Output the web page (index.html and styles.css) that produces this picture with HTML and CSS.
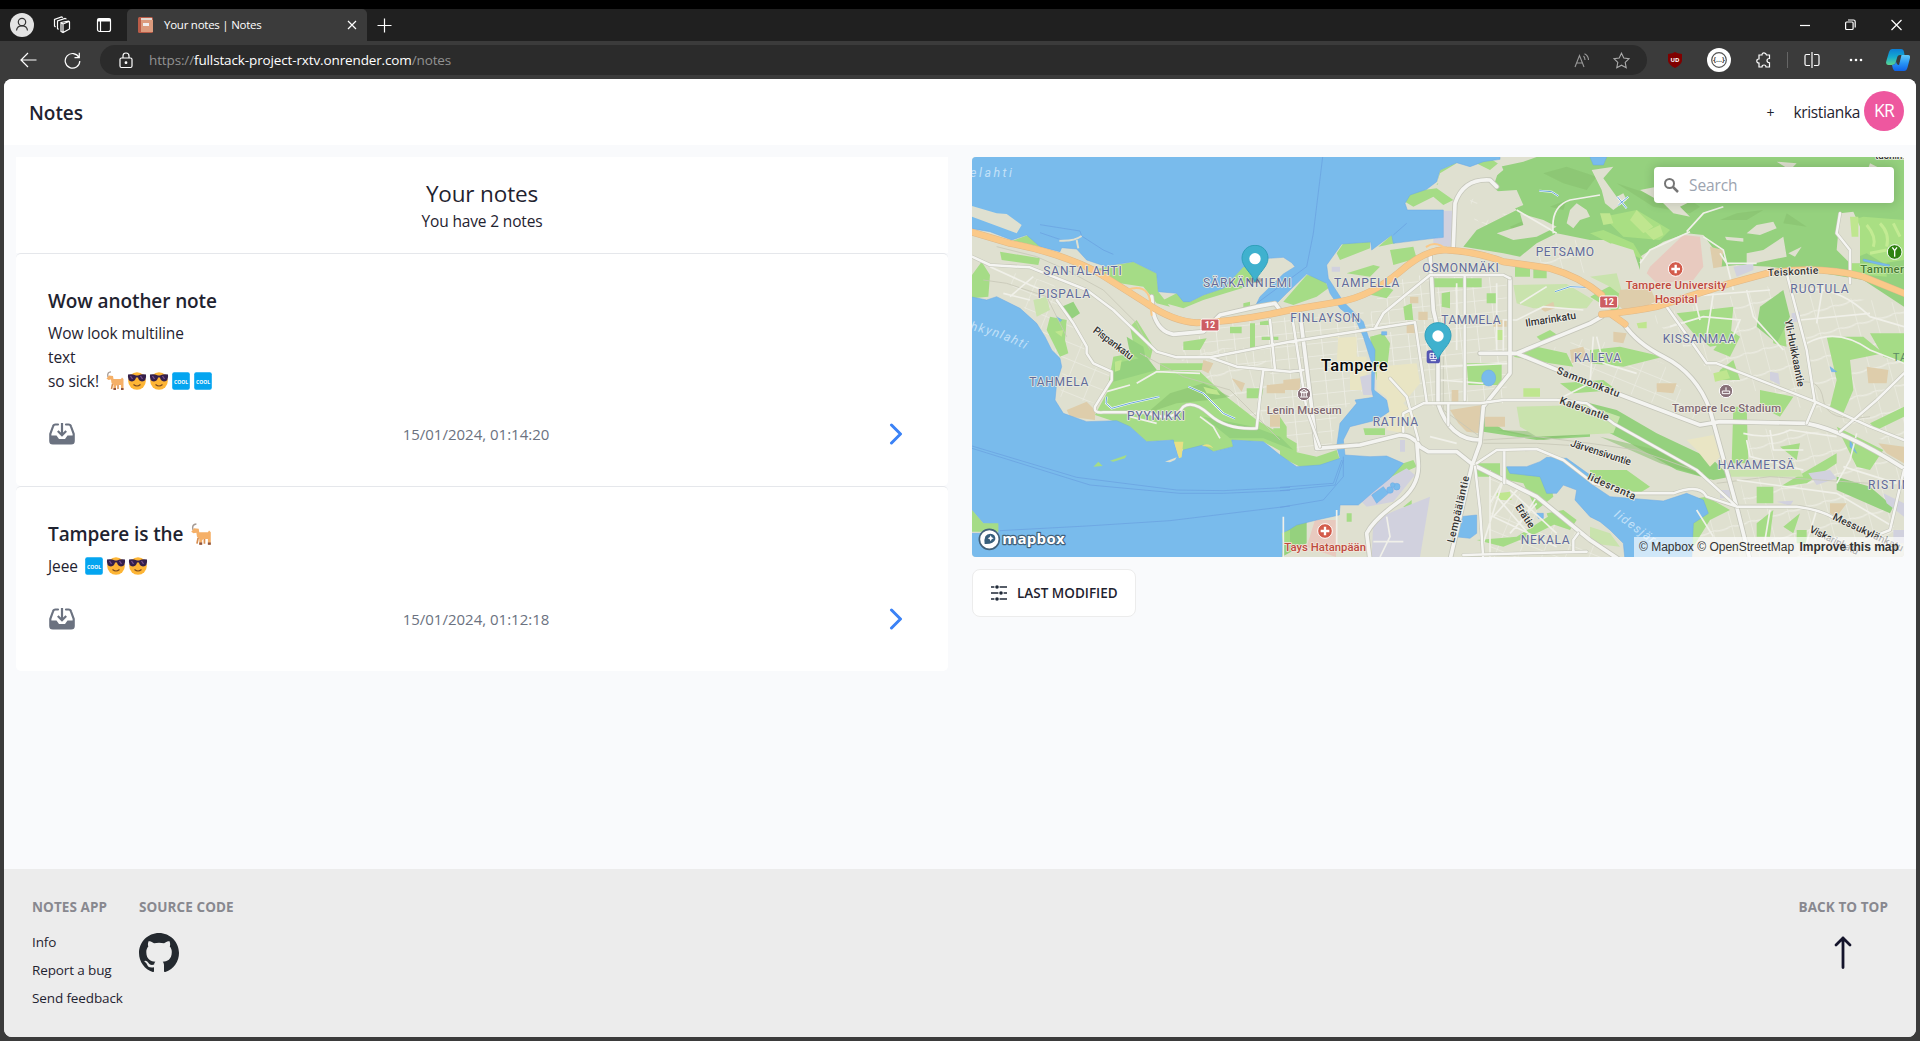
FILE: index.html
```html
<!DOCTYPE html>
<html lang="en">
<head>
<meta charset="utf-8">
<title>Your notes | Notes</title>
<link rel="stylesheet" href="styles.css">
</head>
<body>
<svg class="defs" width="0" height="0">
  <symbol id="goat" viewBox="0 0 20 20">
    <path d="M3 6C2 2.500 3.500 1 6 .8" fill="none" stroke="#a59a94" stroke-width="1.300"/>
    <path d="M4 4.500L8 5L8.500 8H16L17 6.500L18.500 8V19H16V14H12L11 15V19H8.500V14L6.500 12L6 8.500L3.500 9L1.500 7.500Z" fill="#f5b068"/>
    <path d="M8.500 17H11V19H8.500ZM16 17H18.500V19H16Z" fill="#8c5543"/><path d="M13 14V18M7.500 13L6.500 18" stroke="#d88e50" stroke-width="1.500"/>
  </symbol>
  <symbol id="shades" viewBox="0 0 20 20">
    <circle cx="10" cy="10" r="8.800" fill="#fdb535"/>
    <path d="M1 3.500Q5 2.500 9 4.500H11Q15 2.500 19 3.500Q19.800 10 15 10.500Q11.500 10 11 6.500H9Q8.500 10 5 10.500Q.2 10 1 3.500Z" fill="#35204b"/>
    <path d="M3.500 5L5.500 8M13.500 5L15.500 8" stroke="#78528d" stroke-width="1.300"/>
    <path d="M6.500 13.500Q10 16.500 13.500 13.500" fill="none" stroke="#7b4a20" stroke-width="1.200"/>
  </symbol>
  <symbol id="cool" viewBox="0 0 20 20"><rect x="1.200" y="1.200" width="17.600" height="17.600" rx="2" fill="#04a5f0"/><text x="10" y="12.600" text-anchor="middle" textLength="14" lengthAdjust="spacingAndGlyphs" class="cool-text">COOL</text></symbol>
  <symbol id="inbox" viewBox="0 0 26 22"><path d="M9 1.500H6.500Q4.500 1.500 4 3.500L1.300 11V18Q1.300 20.500 3.800 20.500H22.200Q24.700 20.500 24.700 18V11L22 3.500Q21.500 1.500 19.500 1.500H17" fill="none" stroke="#6b7280" stroke-width="2.200" stroke-linecap="round"/><path d="M1.300 12.500H7.500L10 16H16L18.500 12.500H24.700V18Q24.700 21 21.700 21H4.300Q1.300 21 1.300 18Z" fill="#6b7280"/><path d="M13 0V12M8.800 8L13 12.200L17.200 8" fill="none" stroke="#6b7280" stroke-width="2.200"/></symbol>
  <symbol id="chevron" viewBox="0 0 14 22"><path d="M2.500 2L11.500 11L2.500 20" fill="none" stroke="#3b82f6" stroke-width="3" stroke-linecap="round" stroke-linejoin="round"/></symbol>
  <symbol id="pin" viewBox="0 0 84 116"><path d="M42 2C18 2 3 20 3 41C3 67 32 84 42 112C52 84 81 67 81 41C81 20 66 2 42 2Z" fill="#3fb1ce" stroke="#2f9fb9" stroke-width="3"/><circle cx="42" cy="42" r="17" fill="#fff"/></symbol>
</svg>

<div class="browser">
  <header class="tabs">
    <div class="tools">
      <svg width="24" height="24" viewBox="0 0 24 24"><circle cx="12" cy="12" r="12" fill="#e3e3e3"/><circle cx="12" cy="9" r="3.700" fill="none" stroke="#333" stroke-width="1.200"/><path d="M6.500 17.500Q7 12.800 12 12.800T17.500 17.500" fill="none" stroke="#333" stroke-width="1.200"/></svg>
      <svg width="18" height="18" viewBox="0 0 18 18" class="line"><path d="M8 6.500L15.500 5Q16.500 5 16.500 6V13L10 16.500L8 15.500ZM8 6.500L10 8V16M10 8L16 5.500M5.500 13.500L4.500 12.500V5L12 2.500L13.500 3M2.500 11L1.500 10V3.500L8.500 1L10 1.500"/></svg>
      <svg width="16" height="16" viewBox="0 0 16 16" class="line"><rect x="1.500" y="1.500" width="13" height="13" rx="2"/><path d="M1.500 3H14.500" stroke-width="3"/><path d="M4.500 4V14"/></svg>
    </div>
    <div class="tab">
      <svg width="16" height="16" viewBox="0 0 16 16"><rect x="0" y="0" width="15" height="16" rx="1.500" fill="#ba5c48"/><path d="M3 1H14V3H3Z" fill="#e4d8d0"/><path d="M3 3H15V15H3Z" fill="#dc9b7d"/><path d="M5 6H11V9H5Z" fill="#f1eeee"/></svg>
      <span class="tab-title">Your notes | Notes</span>
      <svg width="10" height="10" viewBox="0 0 10 10" class="line"><path d="M1 1L9 9M9 1L1 9"/></svg>
    </div>
    <svg class="new-tab line" width="15" height="15" viewBox="0 0 15 15"><path d="M7.500 .5V14.500M.5 7.500H14.500"/></svg>
    <div class="window-buttons">
      <svg width="10" height="12" viewBox="0 0 10 12" class="line"><path d="M0 6.500H10"/></svg>
      <svg width="11" height="12" viewBox="0 0 11 12" class="line"><rect x=".6" y="3" width="7.500" height="7.500" rx="1"/><path d="M3 1H8.500Q10.200 1 10.200 2.700V8.500"/></svg>
      <svg width="11" height="12" viewBox="0 0 11 12" class="line"><path d="M.5 1L10.500 11M10.500 1L.5 11"/></svg>
    </div>
  </header>
  <div class="toolbar">
    <svg class="back line" width="17" height="16" viewBox="0 0 17 16"><path d="M16.500 8H1M8 1L1 8L8 15"/></svg>
    <svg class="reload line" width="17" height="17" viewBox="0 0 17 17"><path d="M15 5.500A7.300 7.300 0 1 0 15.800 9M15.300 .8V5.700H10.500"/></svg>
    <div class="address">
      <svg width="14" height="17" viewBox="0 0 14 17" class="line"><rect x="1" y="6" width="12" height="9.500" rx="1.500"/><path d="M4 6V4Q4 1 7 1T10 4V6"/><circle cx="7" cy="10.700" r=".8" fill="#fff"/></svg>
      <span class="url">https://<b>fullstack-project-rxtv.onrender.com</b>/notes</span>
      <svg class="read" width="16" height="15" viewBox="0 0 16 15"><path d="M1 14L5.500 2.500L10 14M2.500 10H8.500M9.500 3Q11 4.500 11 7M10.500 .8Q14.500 3 14.500 7" fill="none" stroke="#999" stroke-width="1.100"/></svg>
      <svg class="star" width="17" height="17" viewBox="0 0 17 17"><path d="M8.500 1.200L10.800 6L16 6.700L12.200 10.400L13.200 15.700L8.500 13.200L3.800 15.700L4.800 10.400L1 6.700L6.200 6Z" fill="none" stroke="#aaa" stroke-width="1.100"/></svg>
    </div>
    <div class="extensions">
      <svg width="14" height="16" viewBox="0 0 14 16"><path d="M7 0Q9 1.500 14 2V9Q13 13 7 16Q1 13 0 9V2Q5 1.500 7 0Z" fill="#800000"/><text x="7" y="9.800" text-anchor="middle" class="shield">UD</text></svg>
      <svg class="json" width="24" height="24" viewBox="0 0 24 24"><circle cx="12" cy="12" r="12" fill="#fff"/><circle cx="12" cy="12" r="7.300" fill="none" stroke="#555" stroke-width="1.200"/><text x="12" y="14.300" text-anchor="middle" class="braces">{...}</text></svg>
      <svg class="puzzle line" width="16" height="17" viewBox="0 0 16 17"><path d="M3 3H6Q6 .8 8 .8T10.500 3H13.500V6.500Q11 6.500 11 8.500T13.500 10.800V15H10Q10 13 8 13T6 15H3V11Q.8 11 .8 9T3 7Z"/></svg>
      <i class="separator"></i>
      <svg width="16" height="16" viewBox="0 0 16 16" class="line"><path d="M6 2.500H2.500Q1 2.500 1 4V12Q1 13.500 2.500 13.500H6M10 2.500H13.500Q15 2.500 15 4V12Q15 13.500 13.500 13.500H10M8 0V16"/></svg>
      <svg class="more" width="14" height="4" viewBox="0 0 14 4"><circle cx="2" cy="2" r="1.300" fill="#fff"/><circle cx="7" cy="2" r="1.300" fill="#fff"/><circle cx="12" cy="2" r="1.300" fill="#fff"/></svg>
      <svg class="copilot" width="24" height="22" viewBox="0 0 24 22">
        <linearGradient id="ca" x2="0" y2="1"><stop offset="0" stop-color="#0b7ed6"/><stop offset=".5" stop-color="#15a9cf"/><stop offset="1" stop-color="#5bd58f"/></linearGradient>
        <linearGradient id="cb" x2="0" y2="1"><stop offset="0" stop-color="#5fc9f8"/><stop offset=".5" stop-color="#2995f4"/><stop offset="1" stop-color="#0f62e8"/></linearGradient>
        <path d="M6 0H15Q17.500 0 18 3L18.500 6H14Q11.500 6 11 9L9.500 14Q8.500 16 6 16H2Q-.5 16 .2 12.500L3 3Q4 0 6 0Z" fill="url(#ca)"/><path d="M15 6H22Q24.500 6 24 9L21.500 18.500Q20.500 22 18 22H9.500Q7 22 6 16Q8.700 16 9.500 14L10 12Q10.500 16 13 16L15.500 6Z" fill="url(#cb)"/></svg>
    </div>
  </div>

  <main class="page">
    <nav class="navbar">
      <span class="brand">Notes</span>
      <div class="account"><span class="add">+</span><span class="user">kristianka</span><span class="avatar">KR</span></div>
    </nav>
    <div class="content">
      <section class="notes">
        <div class="heading"><h1>Your notes</h1><p>You have 2 notes</p></div>
        <article class="note">
          <h2>Wow another note</h2>
          <p>Wow look multiline<br>text<br>so sick! <svg class="emoji"><use href="#goat"/></svg><svg class="emoji"><use href="#shades"/></svg><svg class="emoji"><use href="#shades"/></svg><svg class="emoji"><use href="#cool"/></svg><svg class="emoji"><use href="#cool"/></svg></p>
          <div class="note-foot"><svg class="inbox"><use href="#inbox"/></svg><time>15/01/2024, 01:14:20</time><span class="open"><svg width="14" height="22"><use href="#chevron"/></svg></span></div>
        </article>
        <article class="note">
          <h2>Tampere is the <svg class="emoji big"><use href="#goat"/></svg></h2>
          <p>Jeee <svg class="emoji"><use href="#cool"/></svg><svg class="emoji"><use href="#shades"/></svg><svg class="emoji"><use href="#shades"/></svg></p>
          <div class="note-foot"><svg class="inbox"><use href="#inbox"/></svg><time>15/01/2024, 01:12:18</time><span class="open"><svg width="14" height="22"><use href="#chevron"/></svg></span></div>
        </article>
      </section>
      <section class="side">
        <div class="map">
          <svg class="map-canvas" viewBox="6 21 2796 1200">
            <defs>
              <pattern id="grid" width="52" height="38" patternUnits="userSpaceOnUse" patternTransform="rotate(-6)"><path d="M0 0H52M0 0V38" stroke="#f1f1ea" stroke-width="5" fill="none"/></pattern>
              <pattern id="grid2" width="66" height="47" patternUnits="userSpaceOnUse" patternTransform="rotate(22)"><path d="M0 0H66M0 0V47" stroke="#efefe7" stroke-width="4" fill="none"/></pattern>
              <pattern id="grid3" width="58" height="70" patternUnits="userSpaceOnUse" patternTransform="rotate(-15)"><path d="M0 0Q30 12 58 0M0 0V70" stroke="#efefe7" stroke-width="4" fill="none"/></pattern>
              <path id="bay" d="M0 540Q110 560 240 640"/>
            </defs>
            <rect x="0" y="0" width="2810" height="1230" fill="#dfe0d0"/>
            <g class="streets">
              <path fill="url(#grid)" d="M750 520L1180 480L1200 700L1100 800L1080 910L950 900L900 670L620 600ZM1190 560L1400 520L1400 770L1250 760ZM1240 400L1380 370L1400 520L1180 540ZM1400 380H1610V760H1400Z"/>
              <path fill="url(#grid2)" d="M100 360L250 400L350 600L420 680L380 760L270 740L280 640L160 470ZM1500 150L1600 110L1640 180L1520 240ZM1660 620L1860 560L2080 640L2200 820L1900 700ZM1560 980L1900 1180V1221H1560Z"/>
              <path fill="url(#grid3)" d="M1700 290L1860 260L1850 370L1650 335ZM2040 500L2430 400L2510 780L2240 680ZM2470 430L2802 460V900L2540 780ZM2290 830L2620 850L2800 960L2790 1210L2320 1060ZM2160 1080H2700V1221H2190ZM600 600L880 590L930 860L760 740Z"/>
            </g>
            <g fill="#a5dc86">
              <path d="M6 375L35 335L60 375L55 440L6 445ZM90 305L210 325L205 345L95 330ZM128 272L175 255L210 290ZM365 360L490 335L560 370L565 425L600 470L560 460L520 410L450 400ZM570 455L620 430L660 455L700 435L760 415L820 350L870 360L830 410L700 450L640 475ZM240 500L290 510L285 570L295 610L270 620L230 540ZM480 530L500 510L550 590L540 630L490 580ZM640 575L710 565L690 600L640 600ZM430 620L510 605L560 660L690 665L770 740L860 810L980 880L980 930L880 875L785 870L790 890L730 905L640 900L600 870L530 875L480 830L375 795L410 730ZM570 640H700V660H570ZM830 715H880L875 745H830ZM910 835H940V865H910ZM820 460L840 455V475H820Z"/>
              <path d="M780 530H815V550H780ZM840 520H855V600H840ZM870 515L905 510V525H870ZM875 560H925V570H875ZM1100 310L1120 280L1200 275V295L1110 330ZM1225 290L1265 255L1275 280ZM940 455L1010 375L1060 380L1075 415L1040 440L970 465ZM1260 300L1330 290L1340 325L1270 345ZM1130 370L1210 345L1230 350L1200 380ZM1180 430L1250 410L1270 420L1250 445ZM1305 155L1320 125L1400 115L1450 150L1420 165L1390 140L1330 170ZM1400 105L1410 60L1460 38V50L1425 90ZM1500 40L1560 25L1590 45L1560 70ZM1390 385H1535V412H1390ZM1415 430L1440 425V475L1415 470ZM1300 470L1325 460L1330 510H1305ZM1400 540H1420V590H1400ZM1635 340L1680 350V380H1635ZM1690 350L1730 360V385H1690ZM1200 560L1240 550L1260 580L1250 670L1220 690ZM1630 620L1700 590L1790 610L1810 650L1740 640ZM1490 640H1595V705H1495ZM1550 430H1580V460H1550ZM1700 560L1740 540L1770 560L1720 580Z"/>
              <path d="M930 800L950 830V900L1040 920L1100 900L1110 930L1060 950H990L930 920ZM1180 835H1245V855H1185ZM1300 940L1330 930L1340 950L1260 985L1210 1030L1160 1065L1180 1030ZM1300 1070L1325 1050V1085ZM1130 1090H1145V1115H1130ZM1520 1170L1640 1160L1750 1090L1780 1110L1700 1150L1600 1190ZM1520 940H1590V980H1520ZM1600 950L1700 960L1740 990L1750 1040L1700 1080L1660 1000L1610 990ZM1730 1090L1780 1080L1820 1110L1800 1140L1740 1120ZM1860 600L1950 590L2080 620L1960 650L1860 640ZM1770 700L1900 690L1940 720L1810 730ZM2230 600L2280 540L2310 560L2280 620ZM1860 440L1920 400L1960 440L1940 490ZM2120 490L2290 470L2280 580L2220 590L2170 550Z"/>
              <path d="M2250 660L2290 630L2310 690L2240 690ZM2290 770L2330 770L2335 940H2285ZM2400 460L2430 430L2450 590L2410 580ZM2570 560L2680 560L2740 610L2640 630L2650 720L2620 790L2580 770L2600 690ZM2700 820L2802 770V800L2720 840ZM2370 720L2470 740L2430 800L2370 770ZM2430 890L2490 880L2480 930ZM2600 830L2740 900L2700 960L2660 950ZM2360 1010H2410V1060H2360ZM2430 1010L2480 980L2600 910L2600 940L2510 1000ZM2360 1120L2410 1080L2400 1160L2360 1160ZM2440 1130L2490 1090L2470 1150ZM2150 1050L2210 1040L2280 1080L2220 1110L2170 1190ZM1860 960L1970 960L2040 1010L1990 1040L1860 990ZM2480 1140H2510V1180H2480ZM2700 550H2802V640L2740 620Z"/>
            </g>
            <g fill="#95d17e">
              <path d="M1660 35L1700 21H2802V470L2680 390L2560 370L2400 350L2300 345L2250 350L2240 310L2200 255L2150 250L2080 275L2010 320L2010 360L1960 345L1980 290L1940 270L1860 270L1760 250L1700 280L1650 320L1600 310L1480 290L1520 240L1640 180L1600 140L1570 110L1590 50Z"/>
              <path d="M275 470L310 455L330 490L300 510ZM470 560L520 590L530 640L480 610ZM1530 790L1600 840L1700 860L1860 840L1860 860L1700 870L1540 845ZM1860 760L1940 780L2060 850L2230 930L2280 980L2230 990L2120 960L1980 880L1860 820ZM935 1130L1010 1110V1180L935 1221ZM2600 980L2700 1010L2770 1070L2760 1090L2600 1020ZM2370 470L2440 420L2460 500L2420 580L2360 530ZM435 640L530 620L560 660L430 695ZM700 800L850 830L930 860L970 900L880 865L780 865Z"/>
            </g>
            <g fill="#86bf6e" opacity=".55"><path d="M530 790L600 730L700 700L780 740L720 750L620 760ZM1720 70L1790 50L1880 80L1850 120L1780 100ZM1620 230L1690 200L1650 260ZM1740 170L1790 150L1780 180ZM1940 100L2030 130L2100 110L2190 170L2160 190L2050 170ZM2250 210L2300 190L2380 180L2330 210ZM2450 190L2510 230L2440 220ZM1580 840L1860 850L1720 870ZM1890 860L2060 900L2200 980L2070 940Z"/></g>
            <g fill="#a9df83"><path d="M2610 220L2680 200L2802 210V330L2740 340L2690 310L2640 330ZM2640 340H2750V380L2640 370ZM1900 200L2000 180L2100 240L2070 270L1960 260ZM2020 330L1860 250L1900 240L1990 280Z"/></g>
            <g stroke="#c3eb93" stroke-width="9" fill="none"><path d="M2690 225Q2720 260 2710 290M2730 220Q2760 250 2750 290M2770 220L2790 260M2700 310L2750 300"/></g>
            <g fill="#dfe0d0">
              <path d="M1460 40L1510 35L1560 60L1590 35L1600 60L1540 110L1460 120L1400 100L1410 70ZM1700 260L1630 270L1580 250L1660 225L1650 190L1720 210L1760 230ZM1790 220L1800 180L1820 160L1850 180L1860 200L1830 210L1810 235ZM1500 180L1560 125L1640 120L1660 165L1530 220ZM1865 60L1930 50L1900 85L1940 140L1960 130L1970 150L1930 180L1905 160L1895 120ZM1925 280L1990 300L2010 360L1860 440V320ZM2010 120L2060 110L2080 140L2170 150L2130 170L2160 200L2110 190L2080 160ZM2380 300L2440 260L2450 320L2330 345L2330 310ZM2610 190L2650 185L2670 230V340H2640L2600 300ZM2350 80L2400 90L2380 110ZM2420 35L2480 40L2460 60Z"/>
              <path d="M2330 250L2360 225L2410 215L2420 235L2370 255ZM2265 260L2320 265V275L2270 270ZM2455 310L2495 290L2475 320ZM2700 40L2740 60L2690 70Z"/>
            </g>
            <g fill="#c9e3ad"><path d="M1630 405L1790 402L1870 450L1850 475H1690L1640 460ZM1640 770L1850 765L1950 800L1930 850L1700 860L1650 830ZM2270 960L2490 960L2500 980H2270ZM190 450L230 440L240 480L200 500ZM1860 380L1940 370L1960 440L1920 410ZM1860 1130L1920 1150L1950 1190L1860 1180Z"/></g>
            <g fill="#bfe68f"><path d="M1980 210L2000 180L2050 230L2020 250ZM2025 245L2070 225L2080 255L2050 270ZM1890 190L1920 190L1930 220L1900 225ZM2000 520L2030 515V535H2005ZM2230 670L2270 660L2280 685L2235 695ZM1660 715H1710V740H1660ZM435 635L455 630L450 660L435 665ZM1580 1030L1620 1025L1625 1050H1580ZM1580 540H1600V570H1580ZM700 710L740 720L750 735L710 730ZM255 545L280 540L275 560ZM2640 200H2665V260H2645Z"/></g>
            <path d="M2040 350L2140 255L2190 260L2200 350L2170 390L2060 400L2030 370ZM1035 1110H1100L1098 1221L1010 1190Z" fill="#e8cabf"/>
            <path d="M2220 290L2260 300L2255 350L2230 355ZM1950 420L2040 410L2060 460L1970 490L1940 460ZM1440 780L1535 765L1530 850L1490 845L1465 820ZM290 780L350 755L375 780V810L300 800ZM700 630L730 640L715 670L695 660ZM785 685L825 700L815 725ZM890 705L945 700V730H890ZM900 790H930V830H900ZM1320 440H1345V460H1320ZM1345 485H1373V510H1345ZM1310 520H1335V550H1310ZM1710 475L1750 455L1755 475L1725 485ZM1570 510H1610V530H1570ZM1545 800H1605V830H1545ZM2690 650L2755 660L2750 700L2695 700ZM2725 880L2802 890V940L2750 910ZM2580 1060L2630 1060L2600 1100L2580 1090ZM2060 700L2120 700L2110 730L2060 725ZM1930 545L1970 550L1960 580L1930 575ZM1800 600L1840 590L1850 620L1805 640ZM1445 720H1465V755H1445ZM940 690L990 685V720H940Z" fill="#decdab"/>
            <path d="M1070 565L1105 560L1100 640L1140 645V720H1190V620H1160V560ZM1220 650L1340 640L1350 700L1300 760L1340 800L1300 850L1250 840V740L1220 720ZM2150 870L2230 855L2250 920L2220 950L2180 900Z" fill="#e9e5c4"/>
            <path d="M1420 182H1460L1445 290L1390 285V262H1420ZM1170 680L1215 670V735L1180 735ZM1160 1040L1310 955L1335 975L1270 1055L1190 1070ZM1210 1110L1280 1080L1380 1040L1350 1221H1205ZM2290 350L2350 340L2350 360L2300 380ZM2465 490L2490 485V515H2465ZM2400 665L2425 670L2430 705L2400 690ZM2515 970L2580 960L2600 985L2540 1005ZM2740 1030L2802 1060V1100L2750 1060ZM1290 870H1305V905H1290ZM2420 1055L2470 1052L2460 1068ZM1085 350L1110 350V365H1085ZM2250 1020H2280V1045H2250ZM2770 1140H2802V1180H2770Z" fill="#d1d1de"/>
            <g fill="#79bbec" stroke="#6ba9e6" stroke-width="1.500">
              <path d="M0 0H1590V28L1540 35L1500 50L1460 38L1410 60L1400 95L1370 118L1320 135L1305 160L1312 180H1420V262L1390 265L1270 280L1265 255L1205 300L1202 276L1115 282L1070 345L1075 385L1120 455L1140 475L1180 515L1195 560L1215 600L1212 720L1250 750L1257 785L1220 810L1140 830L1120 870L1125 915L1200 920L1250 918L1300 940L1260 985L1205 1030L1165 1065L1110 1065L1108 1095L1040 1110L980 1125L940 1150L935 1230H0V1150H70L85 1150V1125L40 1120L6 1080H0V440L50 450L80 440L150 475L200 520L225 560L245 600L270 625L275 650L260 700L255 750L280 790L350 815L440 812L480 830L530 875L610 870L625 920L640 900L700 885L730 905L790 890L785 870L880 875L930 915L980 950L1050 945L1110 925L1100 890L1110 820L1160 760L1155 750L1210 742L1205 720V640L1180 560L1160 515L1110 475L1080 430L1070 400L1010 372L950 430L920 460L858 465L870 440L940 372L975 350L965 338L940 322L895 325L850 355L820 350L760 415L700 435L660 455H640L620 430L565 425L560 370L490 335L440 343L410 350L350 330L320 297L275 293L270 305L210 290L170 255L125 270L60 245L0 235Z"/>
              <path d="M1610 950L1670 950L1710 935L1730 922L1790 925L1860 975V1000L1920 1040L2080 1053L2150 1030L2200 1050L2215 1090L2170 1120L2165 1230H1965L1960 1180L1920 1140L1890 1115L1860 1100L1815 1050L1820 1020L1780 1005L1760 1030L1730 1030L1710 980L1620 970ZM1470 1100L1520 1095L1520 1150L1500 1165L1455 1160Z"/>
              <ellipse cx="1556" cy="684" rx="21" ry="24"/><path d="M1205 1035L1240 1010L1255 1030L1220 1060ZM260 500L275 510L270 515ZM1700 1090H1720V1105H1705ZM1860 21H1910L1900 45L1870 45ZM2640 870L2660 910L2640 890ZM2580 650L2600 665H2585ZM1235 545H1250V555H1235ZM2680 327L2760 345L2755 350L2680 333Z"/><circle cx="1260" cy="1020" r="10"/><circle cx="1280" cy="1010" r="10"/><circle cx="1268" cy="1005" r="7"/>
            </g>
            <path d="M6 168L80 190L110 192L155 225L140 250L6 200Z" fill="#dfe0d0"/>
            <path d="M370 950L385 935L398 948ZM420 932L470 915L465 925L430 935ZM935 1150L960 1140V1190L940 1180ZM6 1080L40 1120H85V1145H6Z" fill="#a5dc86"/>
            <path d="M612 875H640L635 922L627 925ZM695 888Q715 875 730 895L720 890Z" fill="#e7df84"/>
            <path d="M585 935L620 922L615 930L600 937Z" fill="#dfe0d0"/>
            <path d="M6 888L320 982L620 1020L760 1022L960 1012M6 895L360 1005L630 1030H760L960 1021M90 1142L350 1128L600 1112L960 1068M1058 21L1030 250L1010 350L860 460M930 1012L1090 1000L1115 930M930 1022L1095 1005L1120 930M930 1072L1060 1050L1120 980V920M1310 220L1270 255M210 224L330 243L335 258L290 275L210 248M335 258L400 300L430 313" fill="none" stroke="#689fe0" stroke-width="2"/>
            <path d="M268 272Q310 275 335 258M320 270L325 295" fill="none" stroke="#dfe0d0" stroke-width="6"/>
            <g fill="none" stroke="#fff" stroke-width="6"><path d="M410 740L408 760L425 775L480 760L568 740M655 710L700 730L760 790L795 806M1708 122L1745 125L1765 138M1755 425L1800 410L1850 412M1942 140L1970 175M1975 140L1945 165"/><path d="M410 740L408 760L425 775L480 760L568 740M655 710L700 730L760 790L795 806M1708 122L1745 125L1765 138M1755 425L1800 410L1850 412M1942 140L1970 175M1975 140L1945 165" stroke="#4b94d4" stroke-width="2.500"/></g>
            <g fill="none" stroke="#c7c7b7" stroke-width="3" opacity=".8"><path d="M80 290L200 320L290 360L400 420L500 520L540 600M1540 870L1700 860L1860 880L2000 900L2200 970M1540 880L1700 880L1860 890M1420 620V780L1530 860M510 610L640 680L780 720L850 790L930 870M40 390L110 400L230 440L290 560M2240 1000L2400 980L2700 1000M2480 700Q2550 680 2560 750T2700 800"/></g>
            <g fill="none" stroke="#f0f0e9" stroke-width="5">
              <path d="M60 350L180 405L240 430M120 440L190 380M100 430L180 450M500 700L560 665L690 670M410 725L480 705M690 800L730 830L750 865M480 800L560 820M1640 180L1760 250M1750 250Q1740 170 1800 150L1890 135M2010 340L2040 300L2160 245M2200 260L2260 300L2290 420M2150 245L2200 190L2260 170M2250 310L2270 340H2360M1600 610V510H1640L1720 470L1840 480M1650 460L1730 410M1880 560L1900 640L2000 670M1780 740L1860 700L1870 560M2020 480Q2050 450 2150 440L2400 420M2100 530L2200 500L2310 510L2280 580M2170 430L2190 510M2230 430L2210 560M2330 420L2350 500L2440 600M2510 580Q2600 530 2700 600L2802 640M2480 420Q2600 400 2700 500L2802 530M2490 510L2700 490M2560 400L2540 520M2320 850Q2400 870 2460 840L2600 860M2330 870L2340 920L2500 960M2400 840L2410 900H2500M2660 850L2640 930L2600 1000M2620 950L2780 1000M2300 990L2600 1030L2770 1130M2400 1080L2380 1200M2540 1080L2500 1210M2180 1080L2230 1160M1560 960V1221M1600 900V990L1560 1060M1600 990L1540 1180M1650 1010L1570 1100L1760 1190M1700 1040L1650 1120M1700 1060L1620 1150M1580 1040L1700 1180M1620 1020L1760 1150M1250 1100L1260 1160L1230 1221M1210 1175H1300M940 1221V1100M1100 1080V1190M1460 880L1380 860M1400 650L1620 640M1410 690L1540 700M1460 400V600M1580 400V600"/>
            </g>
            <g fill="none" stroke-linejoin="round" stroke-linecap="round">
              <g stroke="#c5c6ba" stroke-width="16"><path d="M545 440L550 490Q565 545 610 553L700 545L750 495L860 470L915 460L930 480M990 490L1040 895L1170 885L1290 855Q1330 855 1350 890L1375 905H1460L1510 945L1700 1040L1860 1170L1950 1230M1340 870L1345 940Q1350 1010 1280 1060T1190 1150L1200 1230M1380 310L1390 480L1404 540V760Q1440 870 1530 870M1530 610H1640L1860 520L1895 500M1640 610L1860 700L2190 825L2250 815L2510 820Q2620 840 2802 955M1960 520Q2000 580 2080 620Q2180 670 2220 780L2300 1070L2340 1230M1620 385V670L1540 770L1530 880L1505 950L1440 1230M1450 290L1455 160Q1480 85 1560 90L1580 110"/></g>
              <g stroke="#f4f4f1" stroke-width="11"><path d="M545 440L550 490Q565 545 610 553L700 545L750 495L860 470L915 460L930 480M990 490L1040 895L1170 885L1290 855Q1330 855 1350 890L1375 905H1460L1510 945L1700 1040L1860 1170L1950 1230M1340 870L1345 940Q1350 1010 1280 1060T1190 1150L1200 1230M1380 310L1390 480L1404 540V760Q1440 870 1530 870M1530 610H1640L1860 520L1895 500M1640 610L1860 700L2190 825L2250 815L2510 820Q2620 840 2802 955M1960 520Q2000 580 2080 620Q2180 670 2220 780L2300 1070L2340 1230M1620 385V670L1540 770L1530 880L1505 950L1440 1230M1450 290L1455 160Q1480 85 1560 90L1580 110"/></g>
              <g stroke="#c6c7bb" stroke-width="11"><path d="M6 320L60 345L180 352L350 420L430 480L560 605L620 622H720L960 575L1335 517L1370 755M720 622L800 650L960 665L1000 660M260 450L310 520L350 590V610L370 640L425 665V690L375 770Q370 790 400 787L530 787Q610 820 640 770Q670 750 720 795T860 835L870 740L880 660M900 510L915 660M965 490L1010 780L1050 890M1215 535L1240 490L1300 440L1380 375H1600L1620 385M1484 380V750M1260 685L1310 740L1345 870M1300 845V790L1360 760L1530 760L1600 750H1760L1850 760L1930 820L2180 960L2300 1070H2480Q2560 1080 2600 1110L2710 1160L2760 1140L2802 960M2450 370L2510 600L2535 760L2510 820M2090 470L2210 640L2240 640L2535 755L2700 830L2802 870M2610 845L2720 750L2802 670M1520 940L1580 900L1700 897L1780 930L1870 1000L1990 1030H2110Q2190 1000 2210 1040L2300 1070M1515 950L1530 1080L1540 1230M1603 900V1000M1435 825L1435 765M1480 1215L1850 1205M1810 1205V1170L1825 1150M2640 400V300L2600 250L2610 190"/></g>
              <g stroke="#f5f5f2" stroke-width="7.500"><path d="M6 320L60 345L180 352L350 420L430 480L560 605L620 622H720L960 575L1335 517L1370 755M720 622L800 650L960 665L1000 660M260 450L310 520L350 590V610L370 640L425 665V690L375 770Q370 790 400 787L530 787Q610 820 640 770Q670 750 720 795T860 835L870 740L880 660M900 510L915 660M965 490L1010 780L1050 890M1215 535L1240 490L1300 440L1380 375H1600L1620 385M1484 380V750M1260 685L1310 740L1345 870M1300 845V790L1360 760L1530 760L1600 750H1760L1850 760L1930 820L2180 960L2300 1070H2480Q2560 1080 2600 1110L2710 1160L2760 1140L2802 960M2450 370L2510 600L2535 760L2510 820M2090 470L2210 640L2240 640L2535 755L2700 830L2802 870M2610 845L2720 750L2802 670M1520 940L1580 900L1700 897L1780 930L1870 1000L1990 1030H2110Q2190 1000 2210 1040L2300 1070M1515 950L1530 1080L1540 1230M1603 900V1000M1435 825L1435 765M1480 1215L1850 1205M1810 1205V1170L1825 1150M2640 400V300L2600 250L2610 190"/></g>
              <path d="M-5 243L120 280Q260 305 380 365L530 460Q610 515 680 518Q800 515 960 480L1110 455Q1200 440 1290 365Q1370 295 1430 300Q1520 305 1600 335L1740 355Q1830 380 1895 435M1895 493Q1990 485 2060 470L2280 400L2390 370Q2540 345 2680 380L2815 435M1920 490L1965 522" stroke="#dfb889" stroke-width="21"/>
              <path d="M-5 243L120 280Q260 305 380 365L530 460Q610 515 680 518Q800 515 960 480L1110 455Q1200 440 1290 365Q1370 295 1430 300Q1520 305 1600 335L1740 355Q1830 380 1895 435M1895 493Q1990 485 2060 470L2280 400L2390 370Q2540 345 2680 380L2815 435M1920 490L1965 522" stroke="#fac989" stroke-width="18"/>
              <path d="M470 420Q530 400 540 450L545 495M1370 290Q1400 270 1430 300" stroke="#fac989" stroke-width="6"/>
            </g>
            <g class="district">
              <text x="220" y="375" textLength="238">SANTALAHTI</text><text x="203" y="445" textLength="160">PISPALA</text><text x="699" y="410" textLength="268">SÄRKÄNNIEMI</text><text x="1092" y="410" textLength="199">TAMPELLA</text><text x="961" y="515" textLength="212">FINLAYSON</text><text x="1357" y="366" textLength="232">OSMONMÄKI</text><text x="1697" y="317" textLength="178">PETSAMO</text><text x="1414" y="522" textLength="181">TAMMELA</text><text x="2461" y="429" textLength="178">RUOTULA</text><text x="2078" y="580" textLength="221">KISSANMAA</text><text x="1812" y="636" textLength="144">KALEVA</text><text x="178" y="708" textLength="180">TAHMELA</text><text x="471" y="809" textLength="177">PYYNIKKI</text><text x="1208" y="828" textLength="139">RATINA</text><text x="1652" y="1183" textLength="150">NEKALA</text><text x="2243" y="957" textLength="232">HAKAMETSÄ</text><text x="2694" y="1018" textLength="130">RISTIN</text>
            </g>
            <text class="park" x="2768" y="632">TA</text>
            <g class="street">
              <text transform="translate(367 545) rotate(37)" textLength="142">Pispankatu</text><text transform="translate(1668 530) rotate(-9)" textLength="153">Ilmarinkatu</text><text transform="translate(1758 670) rotate(21)" textLength="200">Sammonkatu</text><text transform="translate(1767 760) rotate(20)" textLength="155">Kalevantie</text><text transform="translate(1799 888) rotate(18)" textLength="190">Järvensivuntie</text><text transform="translate(1850 987) rotate(24)" textLength="155">Iidesranta</text><text transform="translate(1452 1180) rotate(-77)" textLength="205">Lempääläntie</text><text transform="translate(1635 1070) rotate(57)" textLength="80">Erätie</text><text transform="translate(2394 379) rotate(-3)" textLength="152">Teiskontie</text><text transform="translate(2444 510) rotate(79)" textLength="205">Yli-Huikkaantie</text><text transform="translate(2586 1108) rotate(25)" textLength="230">Messukylänkatu</text><text transform="translate(2516 1145) rotate(26)" textLength="160">Viskarinkatu</text><text x="2715" y="28" textLength="90">taohin.</text>
            </g>
            <g class="water"><text x="0" y="80" textLength="130">elahti</text><text><textPath href="#bay">hkynlahti</textPath></text><text transform="translate(1930 1098) rotate(36)" textLength="180">Iidesjärvi</text></g>
            <g class="red"><text x="1967" y="417" textLength="303">Tampere University</text><text x="2055" y="460" textLength="127">Hospital</text><text x="943" y="1204" textLength="245">Tays Hatanpään</text></g>
            <g class="poi"><text x="890" y="792" textLength="225">Lenin Museum</text><text x="2106" y="786" textLength="327">Tampere Ice Stadium</text></g>
            <text class="golf" x="2671" y="369" textLength="131">Tammer</text>
            <text class="city" x="1053" y="663" textLength="200">Tampere</text>
            <g stroke="#fff" stroke-width="3"><circle cx="2117" cy="357" r="22" fill="#d35b4b"/><circle cx="1065" cy="1143" r="22" fill="#d35b4b"/><circle cx="2774" cy="306" r="22" fill="#2f8210"/><circle cx="1002" cy="732" r="20" fill="#887078"/><circle cx="2268" cy="723" r="20" fill="#887078"/></g>
            <path d="M2117 344V370M2104 357H2130M1065 1130V1156M1052 1143H1078" stroke="#fff" stroke-width="7"/><path d="M2767 292L2774 302L2781 292M2774 302V320" stroke="#fff" stroke-width="4" fill="none"/><path d="M990 741H1014M992 728H1012M995 728V740M1002 728V740M1009 728V740M990 726L1002 718L1014 726ZM2257 723H2279V731H2257ZM2268 712V722" stroke="#fff" stroke-width="3" fill="none"/>
            <g class="shield12"><rect x="693" y="507" width="54" height="36" rx="5"/><text x="720" y="534">12</text><rect x="1889" y="438" width="54" height="36" rx="5"/><text x="1916" y="465">12</text></g>
            <rect x="1370" y="601" width="40" height="39" rx="8" fill="#5356b2"/><path d="M1380 610H1400V626H1380ZM1380 618H1400M1390 610V626M1382 632L1398 632" fill="none" stroke="#fff" stroke-width="3"/>
            <ellipse cx="855" cy="390" rx="22" ry="9" fill="#303030" opacity=".25"/><use href="#pin" x="813" y="284" width="84" height="116"/><use href="#pin" x="1362" y="516" width="84" height="116"/>
            <g class="mapbox"><circle cx="58" cy="1168" r="30" fill="#fff" stroke="#42617a" stroke-width="5"/><path d="M44 1182Q40 1151 61 1151Q77 1152 76 1168Q72 1183 44 1182Z" fill="#385f7c"/><path d="M62 1156L65 1162L71 1165L65 1168L62 1174L59 1168L53 1165L59 1162Z" fill="#fff"/><text x="97" y="1182" textLength="187">mapbox</text></g>
          </svg>
          <div class="search"><svg width="15" height="15" viewBox="0 0 15 15"><circle cx="5.500" cy="5.500" r="4.500" fill="none" stroke="#757575" stroke-width="2"/><path d="M9 9L14 14" stroke="#757575" stroke-width="2.500"/></svg><span>Search</span></div>
          <div class="attribution"><span>© Mapbox</span> <span>© OpenStreetMap</span> <b>Improve this map</b></div>
        </div>
        <button class="sort"><svg width="16" height="16" viewBox="0 0 16 16"><path d="M0 2H16M0 8H16M0 14H16" stroke="#1f2937" stroke-width="1.400"/><path d="M3.400 0H8.600V4H3.400ZM7.400 6H12.600V10H7.400ZM3.400 12H8.600V16H3.400Z" fill="#fff"/><circle cx="6" cy="2" r="1.800" fill="#1f2937"/><circle cx="10" cy="8" r="1.800" fill="#1f2937"/><circle cx="6" cy="14" r="1.800" fill="#1f2937"/></svg><span>LAST MODIFIED</span></button>
      </section>
    </div>
    <footer class="footer">
      <div class="col"><h3>NOTES APP</h3><a>Info</a><a>Report a bug</a><a>Send feedback</a></div>
      <div class="col"><h3>SOURCE CODE</h3><svg class="github" width="40" height="40" viewBox="0 0 16 16"><path fill="#24292f" d="M8 0C3.580 0 0 3.580 0 8c0 3.540 2.290 6.530 5.470 7.590.4.070.55-.17.55-.38 0-.19-.01-.82-.01-1.490-2.010.37-2.530-.49-2.690-.94-.09-.23-.48-.94-.82-1.130-.28-.15-.68-.52-.01-.53.63-.01 1.080.58 1.230.82.72 1.210 1.870.87 2.330.66.07-.52.28-.87.51-1.070-1.780-.2-3.640-.89-3.640-3.950 0-.87.31-1.590.82-2.150-.08-.2-.36-1.020.08-2.120 0 0 .67-.21 2.200.82.640-.18 1.320-.27 2-.27s1.360.09 2 .27c1.530-1.040 2.200-.82 2.200-.82.44 1.100.16 1.920.08 2.120.51.56.82 1.270.82 2.150 0 3.070-1.870 3.750-3.650 3.950.29.25.54.73.54 1.480 0 1.070-.01 1.930-.01 2.200 0 .21.15.46.55.38A8.010 8.010 0 0 0 16 8c0-4.420-3.580-8-8-8Z"/></svg></div>
      <div class="col top"><h3>BACK TO TOP</h3><svg width="18" height="34" viewBox="0 0 18 34"><path d="M9 31.500V2M2 9L9 2L16 9" fill="none" stroke="#14142b" stroke-width="2.800" stroke-linecap="round" stroke-linejoin="round"/></svg></div>
    </footer>
  </main>
</div>
</body>
</html>
```

FILE: styles.css
```css
* { box-sizing: border-box; }
body { margin: 0; font-family: "Open Sans", "Noto Sans", sans-serif; color: #1f2330; }
h1, h2, h3, p { margin: 0; }
svg { flex: none; display: block; }
.defs { position: absolute; }
.line { fill: none; stroke: #fff; stroke-width: 1.2; }
.browser { height: 1041px; display: flex; flex-direction: column; background: #3b3b3b; border-top: 9px solid #000; overflow: hidden; }

.tabs { height: 32px; background: #202020; display: flex; align-items: center; }
.tools { width: 127px; padding-left: 10px; display: flex; align-items: center; gap: 19px; }
.tools svg:last-child { margin-left: 6px; }
.tab { width: 240px; height: 32px; background: #3b3b3b; border-radius: 5px 5px 0 0; display: flex; align-items: center; padding: 0 10px 0 11px; color: #fff; font-size: 11.5px; }
.tab-title { flex: 1; padding: 0 0 2px 10px; letter-spacing: -.25px; white-space: nowrap; }
.new-tab { margin-left: 10px; }
.window-buttons { margin-left: auto; padding-right: 18px; display: flex; gap: 35px; }

.toolbar { height: 38px; display: flex; align-items: center; padding: 0 10px 0 20px; }
.reload { margin: 0 19px 0 27px; }
.address { width: 1547px; height: 30px; border-radius: 15px; background: #2b2b2b; display: flex; align-items: center; padding: 0 17px 0 19px; }
.url { flex: 1; margin-left: 16px; color: #929292; font-size: 13.5px; letter-spacing: -.13px; }
.url b { color: #fff; font-weight: 400; }
.star { margin-left: 23px; }
.extensions { flex: 1; display: flex; align-items: center; padding-left: 21px; }
.json, .puzzle { margin-left: 25px; }
.separator { width: 1px; height: 16px; background: #666; margin: 0 16px 0 15px; }
.more { margin-left: 29px; }
.copilot { margin-left: 23px; }
.shield { font: 700 6px "Open Sans", sans-serif; fill: #fff; }
.braces { font: 700 7px "Open Sans", sans-serif; fill: #444; }

.page { margin: 0 4px 4px; flex: 1; background: #f9fafc; border-radius: 8px; overflow: hidden; display: flex; flex-direction: column; }
.navbar { height: 66px; background: #fff; display: flex; align-items: center; justify-content: space-between; padding: 0 12px 0 25px; }
.brand { font-size: 19px; font-weight: 600; letter-spacing: -.05px; padding-top: 2px; }
.account { display: flex; align-items: center; }
.add { font-size: 14px; margin-right: 19px; }
.user { font-size: 15.5px; letter-spacing: -.35px; margin-right: 4px; }
.avatar { width: 40px; height: 40px; border-radius: 50%; background: #ee579f; color: #fff; font-size: 17.5px; display: grid; place-items: center; letter-spacing: -.7px; margin-top: -2px; padding-bottom: 2px; }
.content { flex: 1; padding: 12px; display: grid; grid-template-columns: 932px 932px; gap: 24px; align-items: start; }
.heading { height: 96px; background: #fff; text-align: center; padding-top: 20px; }
.heading h1 { font-size: 22.5px; font-weight: 400; line-height: 33px; letter-spacing: -.15px; }
.heading p { font-size: 15.5px; line-height: 22px; letter-spacing: -.15px; }
.note { background: #fff; border-top: 1px solid #e5e7eb; border-radius: 5px; padding: 33px 32px 36px; }
.note h2 { font-size: 19px; font-weight: 600; line-height: 28px; margin-bottom: 6px; letter-spacing: -.1px; }
.note p { font-size: 15.5px; line-height: 24px; letter-spacing: -.1px; }
.emoji { display: inline-block; width: 20px; height: 20px; margin-right: 2px; vertical-align: -4px; margin-top: -2px; }
.note p .emoji:first-of-type { margin-left: 2px; }
.emoji.big { width: 24px; height: 23px; margin-left: 1px; vertical-align: -5px; }
.cool-text { font: 700 6px "Open Sans", sans-serif; fill: #fff; letter-spacing: 0; }
.note-foot { height: 32px; margin-top: 25px; display: flex; align-items: center; justify-content: space-between; padding-bottom: 1px; }
.inbox { width: 28px; height: 22px; }
.note-foot time { color: #6b7280; font-size: 15px; width: 148px; text-align: center; white-space: nowrap; letter-spacing: 0; }
.open { width: 40px; display: grid; place-items: center; }

.map { position: relative; height: 400px; border-radius: 4px; overflow: hidden; }
.map-canvas { width: 932px; height: 400px; }
.map-canvas text { paint-order: stroke; stroke-linejoin: round; }
.streets { opacity: .8; }
.district text { font: 400 36px Roboto, sans-serif; fill: #626a9a; stroke: #e9eadf; stroke-width: 5px; letter-spacing: 3px; }
.park { font: 400 34px Roboto, sans-serif; fill: #5d8a66; letter-spacing: 3px; }
.street text { font: 500 31px Roboto, sans-serif; fill: #333; stroke: #eeeee6; stroke-width: 5px; }
.water text { font: italic 400 37px Roboto, sans-serif; fill: #c3e1f8; letter-spacing: 4px; }
.red text { font: 500 34px Roboto, sans-serif; fill: #bf493d; stroke: #f1e5db; stroke-width: 5px; }
.poi text { font: 500 34px Roboto, sans-serif; fill: #7f6872; stroke: #efefe5; stroke-width: 5px; }
.golf { font: 500 34px Roboto, sans-serif; fill: #477a32; stroke: #c7e9b0; stroke-width: 4px; }
.city { font: 500 49px Roboto, sans-serif; fill: #080808; stroke: #f4f4eb; stroke-width: 6px; }
.shield12 { fill: #cd5d62; stroke: #fff; stroke-width: 3px; }
.shield12 text { font: 700 27px Roboto, sans-serif; fill: #fff; stroke: none; text-anchor: middle; }
.mapbox text { font: 700 45px "Open Sans", sans-serif; fill: #fff; stroke: #42617a; stroke-width: 7px; }
.search { position: absolute; top: 10px; right: 10px; width: 240px; height: 36px; background: #fff; border-radius: 4px; box-shadow: 0 0 10px 2px rgba(0,0,0,.12); display: flex; align-items: center; padding-left: 10px; color: #9ca3af; font-size: 15.5px; gap: 10px; letter-spacing: -.1px; }
.attribution { position: absolute; right: 0; bottom: 0; height: 20px; line-height: 20px; width: 270px; padding-left: 5px; background: rgba(255,255,255,.65); font-family: "Liberation Sans", sans-serif; font-size: 12px; color: #333; white-space: nowrap; }
.attribution b { margin-left: 2px; }
.sort { margin-top: 12px; width: 164px; height: 48px; border: 1px solid #ececec; border-radius: 8px; background: #fff; display: flex; align-items: center; padding: 0 0 1px 18px; gap: 10px; color: #1f2330; font: 600 13.5px "Open Sans", sans-serif; white-space: nowrap; letter-spacing: 0; }

.footer { height: 168px; background: #ececec; padding: 28px; display: flex; gap: 16px; }
.col h3 { font-size: 13.5px; line-height: 20px; font-weight: 700; color: #88888f; margin-bottom: 12px; letter-spacing: .08px; white-space: nowrap; }
.col:first-child { width: 91px; }
.col:first-child h3 { margin-bottom: 15px; }
.col a { display: block; font-size: 13.5px; line-height: 20px; margin: 4px 0 8px; letter-spacing: -.12px; white-space: nowrap; }
.github { margin-top: 16px; }
.top { margin-left: auto; display: flex; flex-direction: column; align-items: center; }
.top svg { margin-top: 7px; }
```
